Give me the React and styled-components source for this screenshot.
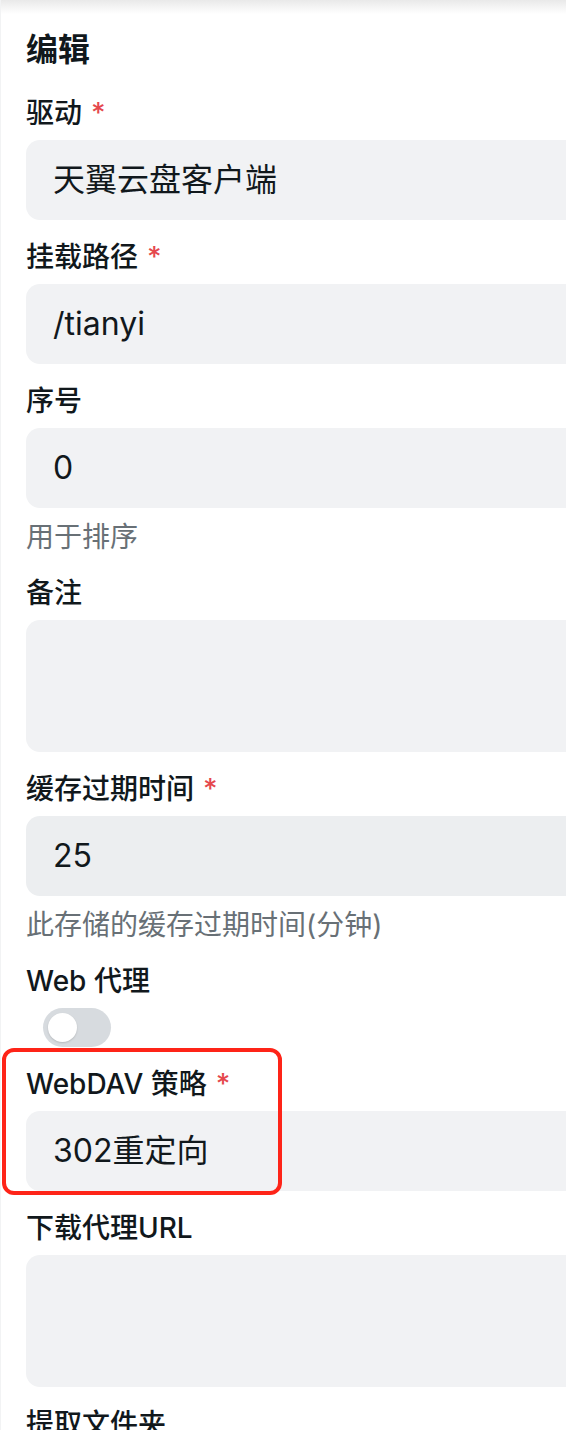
import React from 'react'
import styled, { createGlobalStyle } from 'styled-components'

const GlobalStyle = createGlobalStyle`
  html, body {
    margin: 0;
    padding: 0;
    background: #fff;
    overflow-x: hidden;
  }
  body {
    font-family: Inter, "Noto Sans CJK SC", sans-serif;
    color: #11181c;
  }
`

const Page = styled.div`
  position: relative;
  width: 100%;
  height: 1430px;
  overflow: hidden;
  border-left: 1px solid #f2f3f4;
  box-sizing: border-box;

  &::before {
    content: "";
    position: absolute;
    top: 0;
    left: 0;
    right: 0;
    height: 14px;
    background: linear-gradient(#e9e9e9, rgba(255, 255, 255, 0));
  }
`

const Form = styled.div`
  display: flex;
  flex-direction: column;
  gap: 19px;
  width: 760px;
  padding: 30px 0 0 25px;
`

const Title = styled.h2`
  margin: 0 0 6px;
  font-size: 32px;
  line-height: 40px;
  font-weight: 700;
`

const Field = styled.div`
  position: relative;
  display: flex;
  flex-direction: column;
  align-items: flex-start;
`

const Label = styled.label`
  font-size: 28px;
  line-height: 36px;
  font-weight: 500;
  margin-bottom: 9px;
`

const Star = styled.span`
  color: #e5484d;
  margin-left: 9px;
`

const Input = styled.div`
  box-sizing: border-box;
  width: 100%;
  height: ${p => (p.multiline ? '132px' : '80px')};
  padding: 0 27px;
  display: flex;
  align-items: center;
  background: ${p => (p.dim ? '#eceef0' : '#f1f2f4')};
  border-radius: 14px;
  font-size: 32px;
  line-height: 1;
`

const Help = styled.div`
  margin-top: 11px;
  margin-bottom: 1px;
  font-size: 28px;
  line-height: 36px;
  color: #687076;
`

const Switch = styled.div`
  position: relative;
  margin-left: 17px;
  width: 68px;
  height: 39px;
  border-radius: 20px;
  background: #d7dbdf;

  &::after {
    content: "";
    position: absolute;
    left: 5px;
    top: 5px;
    width: 29px;
    height: 29px;
    border-radius: 50%;
    background: #fff;
    box-shadow: 0 1px 2px rgba(0, 0, 0, 0.15);
  }
`

const Highlight = styled.div`
  position: absolute;
  left: -24px;
  top: -18px;
  width: 280px;
  height: 147px;
  box-sizing: border-box;
  border: 4px solid #fe2418;
  border-radius: 12px;
  pointer-events: none;
`

const fields = [
  { label: '驱动', required: true, value: '天翼云盘客户端' },
  { label: '挂载路径', required: true, value: '/tianyi' },
  { label: '序号', value: '0', help: '用于排序' },
  { label: '备注', multiline: true },
  { label: '缓存过期时间', required: true, value: '25', dim: true, help: '此存储的缓存过期时间(分钟)' },
  { label: 'Web 代理', toggle: true },
  { label: 'WebDAV 策略', required: true, value: '302重定向', marked: true },
  { label: '下载代理URL', multiline: true },
  { label: '提取文件夹', value: '' },
]

export default function App() {
  return (
    <>
      <GlobalStyle />
      <Page>
        <Form>
          <Title>编辑</Title>
          {fields.map(f => (
            <Field key={f.label}>
              <Label>
                {f.label}
                {f.required && <Star>*</Star>}
              </Label>
              {f.toggle ? (
                <Switch />
              ) : (
                <Input multiline={f.multiline} dim={f.dim}>{f.value}</Input>
              )}
              {f.help && <Help>{f.help}</Help>}
              {f.marked && <Highlight />}
            </Field>
          ))}
        </Form>
      </Page>
    </>
  )
}
